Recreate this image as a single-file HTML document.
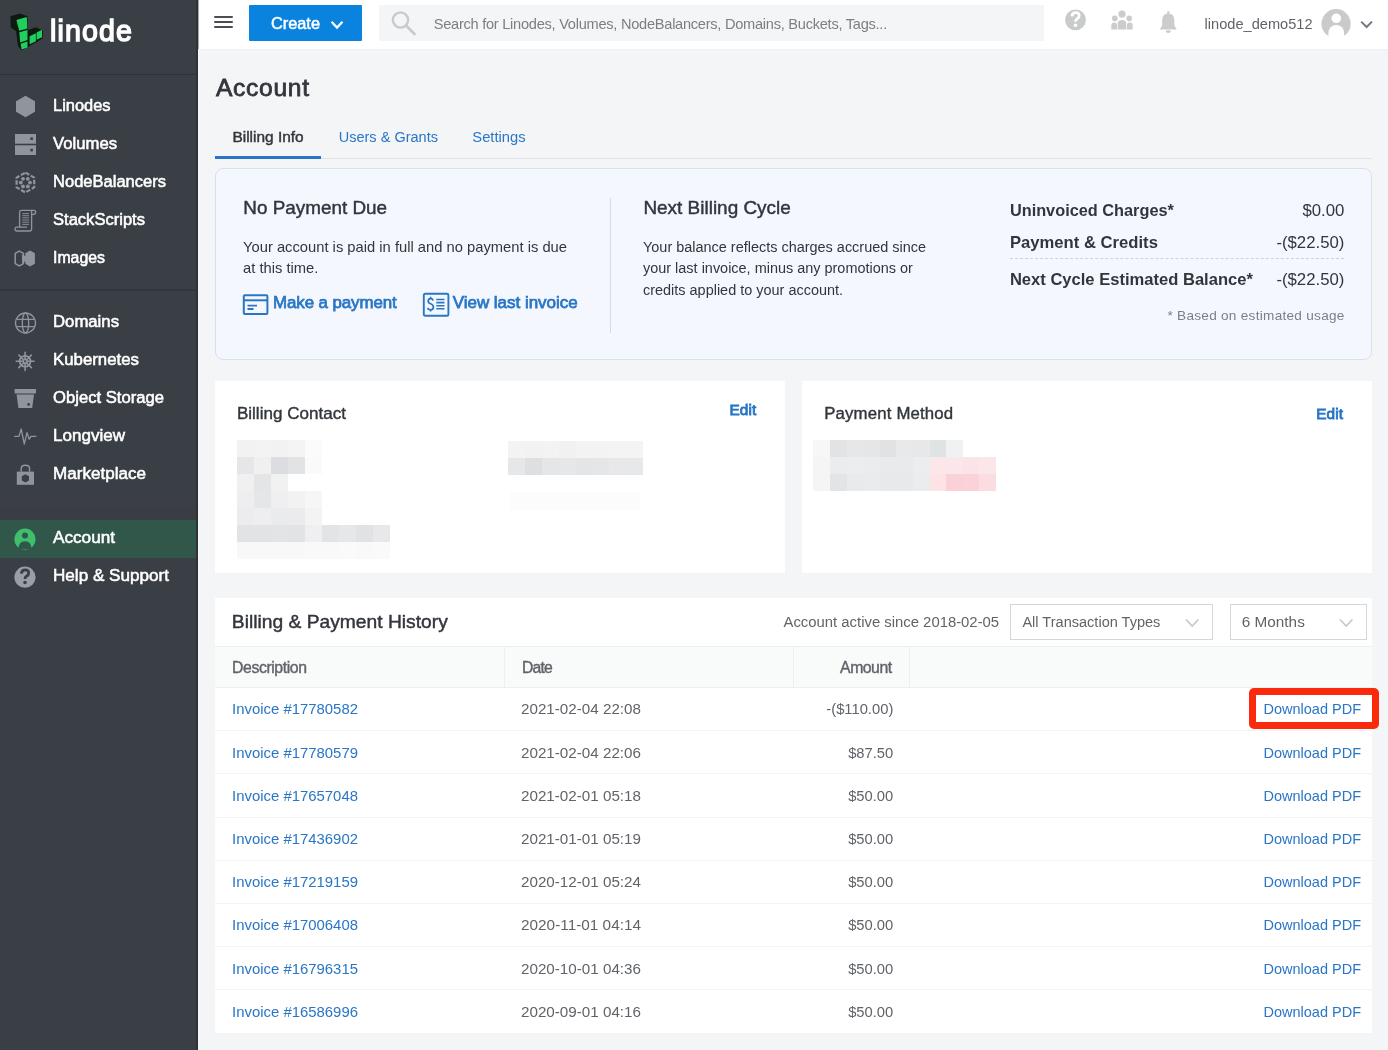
<!DOCTYPE html>
<html><head><meta charset="utf-8"><title>Account</title>
<style>
html,body{margin:0;padding:0;}
body{width:1388px;height:1050px;position:relative;overflow:hidden;background:#f4f5f6;
font-family:"Liberation Sans",sans-serif;}
.t{position:absolute;white-space:nowrap;}
svg{position:absolute;overflow:visible;}
</style></head><body>

<div style="position:absolute;left:0px;top:0px;width:198px;height:1050px;background:#3a3f46;"></div>
<div style="position:absolute;left:0px;top:74px;width:196px;height:1px;background:#2f3337;"></div>
<div style="position:absolute;left:0px;top:289px;width:196px;height:2px;background:#32363c;"></div>
<div style="position:absolute;left:0px;top:508px;width:196px;height:12px;background:#3b3d45;"></div>
<div style="position:absolute;left:0px;top:520px;width:196px;height:38px;background:#31574a;"></div>
<div style="position:absolute;left:196px;top:0px;width:2px;height:1050px;background:#2f3338;"></div>
<div style="position:absolute;left:198px;top:0px;width:1px;height:49px;background:#a3a7ac;"></div>
<svg style="left:0;top:0" width="50" height="60" viewBox="0 0 50 60"><path d="M10.3 16.2 L20 13.6 L27.6 16.3 L28 30 L36 27.2 L43 30.5 L42.5 38.5 L28 47 L21.5 50.5 L18 46 L16 31 L10.8 27.5 Z" fill="#0d1a12"/><path d="M16.4 19.9 L26.8 16.9 L27.4 28.4 L19.2 30.8 Z" fill="#1fd05f"/><path d="M19.3 32.3 L27.5 29.9 L27.5 40.1 L20.2 42.6 Z" fill="#1fd05f"/><path d="M20.6 43.8 L27.5 41.6 L27.5 47.4 L21.6 49.6 Z" fill="#1fd05f"/><path d="M29.6 36.3 L35.9 33.2 L35.9 41.3 L29.6 44.2 Z" fill="#1fd05f"/><path d="M36.6 32.4 L42 29.8 L42 37.2 L36.6 39.8 Z" fill="#1fd05f"/></svg>
<svg style="left:0;top:0" width="198" height="600" viewBox="0 0 198 600"><path d="M25.5 95.8 L35 101.2 L35 111.8 L25.5 117.2 L16 111.8 L16 101.2 Z" fill="#90959c"/><rect x="15" y="134" width="21" height="9.7" fill="#90959c"/><rect x="15" y="145.3" width="21" height="9.7" fill="#90959c"/><rect x="30.3" y="137.4" width="2.6" height="2.6" fill="#3a3f46"/><rect x="30.3" y="148.8" width="2.6" height="2.6" fill="#3a3f46"/><path d="M25.4 172.6 L34.2 177.6 L34.2 187.4 L25.4 192.4 L16.6 187.4 L16.6 177.6 Z" fill="none" stroke="#90959c" stroke-width="2.2" stroke-linejoin="round" stroke-dasharray="4.5 1.6"/><circle cx="23" cy="178.8" r="1.9" fill="#90959c"/><circle cx="27.8" cy="178.8" r="1.9" fill="#90959c"/><circle cx="20.8" cy="182.6" r="1.9" fill="#90959c"/><circle cx="30" cy="182.6" r="1.9" fill="#90959c"/><circle cx="23" cy="186.4" r="1.9" fill="#90959c"/><circle cx="27.8" cy="186.4" r="1.9" fill="#90959c"/><g fill="none" stroke="#90959c" stroke-width="1.3"><path d="M19.6 227.5 V212 Q19.6 210.3 21.3 210.3 H34 Q35.6 210.3 35.6 212.3 Q35.6 214.3 33.6 214.3 H31.6"/><path d="M31.6 210.6 V229 Q31.6 231 29.6 231 H16.8 Q15 231 15 229 Q15 227.2 16.8 227.2 H27"/><path d="M22.3 213.6 H29 M22.3 215.7 H29 M22.3 217.8 H29 M22.3 220 H29 M22.3 222.2 H29 M22.3 224.4 H29" stroke-width="0.9"/></g><path d="M19.3 251.2 L23.4 253.4 V263.6 L19.3 265.8 L15.2 263.6 V253.4 Z" fill="none" stroke="#90959c" stroke-width="1.5"/><path d="M22 254.5 L26 256.5 V261 L22 263 Z" fill="#90959c"/><path d="M30.1 250.6 L34.9 253.2 V263.8 L30.1 266.4 L25.3 263.8 V253.2 Z" fill="#90959c"/><g fill="none" stroke="#90959c" stroke-width="1.3"><circle cx="25.5" cy="323" r="10"/><ellipse cx="25.5" cy="323" rx="3.2" ry="10"/><path d="M16.2 319.3 H34.8 M16.2 326.7 H34.8"/></g><g fill="none" stroke="#90959c"><circle cx="25.1" cy="361.3" r="5.4" stroke-width="1.8"/><path d="M25.1 352.4 V370.4 M16.2 361.3 H34 M18.8 355 L31.4 367.6 M31.4 355 L18.8 367.6" stroke-width="1.6" stroke-linecap="round"/></g><circle cx="25.1" cy="361.3" r="2.6" fill="#90959c"/><circle cx="25.1" cy="361.3" r="1.1" fill="#3a3f46"/><rect x="14.6" y="389" width="21.4" height="4.4" rx="0.6" fill="#90959c"/><path d="M16.6 394.4 H34 L32.2 408 H18.4 Z" fill="#90959c"/><circle cx="28.6" cy="404.4" r="1.4" fill="#3a3f46"/><path d="M14.3 436.4 H19 L21.2 429 L24.3 444 L27 432.6 L29.2 439.2 L31 436.4 H36.4" fill="none" stroke="#90959c" stroke-width="1.3" stroke-linejoin="round"/><path d="M21.2 471.8 V468.6 Q21.2 465.2 25.4 465.2 Q29.6 465.2 29.6 468.6 V471.8" fill="none" stroke="#90959c" stroke-width="1.4"/><rect x="16.8" y="471.6" width="17.2" height="13.2" fill="#90959c"/><path d="M25.4 474.3 L29 476.3 V480.5 L25.4 482.5 L21.8 480.5 V476.3 Z" fill="#3a3f46"/><circle cx="25" cy="539.2" r="10.6" fill="#3fbf6e"/><circle cx="25" cy="535.4" r="3" fill="#31574a"/><path d="M18.6 549.2 Q18.4 541.2 25 541.2 Q31.6 541.2 31.4 549.2 Z" fill="#31574a"/><circle cx="25" cy="577.2" r="10.6" fill="#9a9fa6"/><g transform="translate(25 577.2)"><path d="M-3.6 -3.5 Q-3.3 -7.3 0.1 -7.3 Q3.7 -7.3 3.7 -4.1 Q3.7 -2.1 1.5 -0.9 Q0 -0.1 0 1.9" fill="none" stroke="#3a3f46" stroke-width="2.8"/><circle cx="0" cy="5.3" r="1.75" fill="#3a3f46"/></g></svg>
<div style="position:absolute;left:199px;top:0px;width:1189px;height:49px;background:#ffffff;"></div>
<div style="position:absolute;left:198px;top:49px;width:1190px;height:1px;background:#eef0f2;"></div>
<div style="position:absolute;left:215px;top:158px;width:1157px;height:1px;background:#e1e3e6;"></div>
<div style="position:absolute;left:215px;top:156px;width:106px;height:3px;background:#2a76c6;"></div>
<div style="position:absolute;left:214px;top:16px;width:19px;height:2px;background:#4a4d52;border-radius:1px;"></div>
<div style="position:absolute;left:214px;top:21.2px;width:19px;height:2px;background:#4a4d52;border-radius:1px;"></div>
<div style="position:absolute;left:214px;top:26.4px;width:19px;height:2px;background:#4a4d52;border-radius:1px;"></div>
<div style="position:absolute;left:249px;top:5px;width:113px;height:36px;background:#0a83df;border-radius:1px;"></div>
<svg style="left:330px;top:20px" width="14" height="10" viewBox="0 0 14 10"><path d="M1.5 1.8 L7 7.6 L12.5 1.8" fill="none" stroke="#fff" stroke-width="2.2"/></svg>
<div style="position:absolute;left:379px;top:5px;width:665px;height:36px;background:#f4f5f6;border-radius:1px;"></div>
<svg style="left:390px;top:9px" width="28" height="28" viewBox="0 0 28 28"><circle cx="10.5" cy="11" r="7.6" fill="none" stroke="#c9cacb" stroke-width="2.4"/><path d="M16 16.5 L24.5 25" stroke="#c9cacb" stroke-width="2.8" stroke-linecap="round"/></svg>
<svg style="left:0;top:0" width="1388" height="50" viewBox="0 0 1388 50"><circle cx="1075.5" cy="19.9" r="10.4" fill="#c9cacb"/><g transform="translate(1075.5 19.9)"><path d="M-3.6 -3.5 Q-3.3 -7.3 0.1 -7.3 Q3.7 -7.3 3.7 -4.1 Q3.7 -2.1 1.5 -0.9 Q0 -0.1 0 1.9" fill="none" stroke="#fff" stroke-width="2.8"/><circle cx="0" cy="5.3" r="1.75" fill="#fff"/></g></svg>
<svg style="left:0;top:0" width="1388" height="50" viewBox="0 0 1388 50"><g fill="#cbcccd"><circle cx="1122" cy="14" r="3.6"/><circle cx="1114.8" cy="18.4" r="2.8"/><circle cx="1129.2" cy="18.4" r="2.8"/><path d="M1117.7 29.4 V23.6 Q1117.7 20 1122 20 Q1126.3 20 1126.3 23.6 V29.4 Z"/><path d="M1111.3 29.4 V25.4 Q1111.3 22.4 1114.2 22.4 Q1117 22.4 1117 25.4 V29.4 Z"/><path d="M1127 29.4 V25.4 Q1127 22.4 1129.8 22.4 Q1132.7 22.4 1132.7 25.4 V29.4 Z"/></g><g fill="#cbcccd"><circle cx="1168.3" cy="12.6" r="1.3"/><path d="M1168.3 13.4 C1163.4 13.4 1162.2 17 1162.2 21 V24.6 Q1162.2 26.4 1160.2 28.6 V29.6 H1176.4 V28.6 Q1174.4 26.4 1174.4 24.6 V21 C1174.4 17 1173.2 13.4 1168.3 13.4 Z"/><ellipse cx="1168.3" cy="31.6" rx="2.6" ry="1.4"/></g></svg>
<svg style="left:0;top:0" width="1388" height="50" viewBox="0 0 1388 50"><circle cx="1336.1" cy="23.7" r="14.6" fill="#c9cacb"/><circle cx="1336.3" cy="18.3" r="4.8" fill="#fff"/><path d="M1328.4 40 V32.9 A7.85 7.85 0 0 1 1344.1 32.9 V40 Z" fill="#fff"/><path d="M1361.2 21.6 L1366.6 27 L1372 21.6" fill="none" stroke="#727780" stroke-width="2"/></svg>
<div style="position:absolute;left:215px;top:168px;width:1155px;height:190px;background:#f4f8fe;border:1px solid #d5e3ef;border-radius:8px;"></div>
<svg style="left:242px;top:293px" width="28" height="23" viewBox="0 0 28 23"><rect x="1.8" y="2.3" width="23.6" height="18.6" rx="1" fill="none" stroke="#2a76c6" stroke-width="2"/><path d="M1.8 7.3 H25.4" stroke="#2a76c6" stroke-width="2"/><path d="M5.5 12.6 H15 M5.5 16 H11.5" stroke="#2a76c6" stroke-width="1.8"/></svg>
<svg style="left:422px;top:292px" width="28" height="26" viewBox="0 0 28 26"><rect x="1.8" y="1.8" width="24.6" height="22" rx="1.4" fill="none" stroke="#2a76c6" stroke-width="1.9"/><path d="M11.2 8.4 Q10.6 6.6 8.6 6.6 Q6.2 6.6 6.2 9 Q6.2 11 8.6 11.8 Q11.4 12.8 11.4 15.2 Q11.4 17.8 8.6 17.8 Q6.2 17.8 5.8 15.8 M8.6 4.8 V6.6 M8.6 17.8 V19.6" fill="none" stroke="#2a76c6" stroke-width="1.7"/><path d="M14.3 7.5 H22.5 M14.3 10.6 H22.5 M14.3 13.7 H22.5 M14.3 16.8 H22.5" stroke="#2a76c6" stroke-width="1.6"/></svg>
<div style="position:absolute;left:610px;top:198px;width:1px;height:135px;background:#d3dbe5;"></div>
<div style="position:absolute;left:1010px;top:258px;width:334px;height:0;border-top:1px dashed #c9d3de;"></div>
<div style="position:absolute;left:215px;top:381px;width:570px;height:192px;background:#ffffff;"></div>
<div style="position:absolute;left:802px;top:381px;width:570px;height:192px;background:#ffffff;"></div>
<div style="position:absolute;left:237.3px;top:440.4px;width:17.2px;height:17.2px;background:#f2f2f3;"></div><div style="position:absolute;left:254.2px;top:440.4px;width:17.2px;height:17.2px;background:#f3f3f4;"></div><div style="position:absolute;left:271.1px;top:440.4px;width:17.2px;height:17.2px;background:#f2f2f3;"></div><div style="position:absolute;left:288.0px;top:440.4px;width:17.2px;height:17.2px;background:#f4f4f5;"></div><div style="position:absolute;left:304.9px;top:440.4px;width:17.2px;height:17.2px;background:#fbfbfb;"></div><div style="position:absolute;left:237.3px;top:457.3px;width:17.2px;height:17.2px;background:#e6e6e8;"></div><div style="position:absolute;left:254.2px;top:457.3px;width:17.2px;height:17.2px;background:#f0f0f1;"></div><div style="position:absolute;left:271.1px;top:457.3px;width:17.2px;height:17.2px;background:#dcdde0;"></div><div style="position:absolute;left:288.0px;top:457.3px;width:17.2px;height:17.2px;background:#e2e3e5;"></div><div style="position:absolute;left:304.9px;top:457.3px;width:17.2px;height:17.2px;background:#fafafa;"></div><div style="position:absolute;left:237.3px;top:474.2px;width:17.2px;height:17.2px;background:#f0f0f1;"></div><div style="position:absolute;left:254.2px;top:474.2px;width:17.2px;height:17.2px;background:#e4e5e7;"></div><div style="position:absolute;left:271.1px;top:474.2px;width:17.2px;height:17.2px;background:#f1f1f2;"></div><div style="position:absolute;left:237.3px;top:491.1px;width:17.2px;height:17.2px;background:#eeeef0;"></div><div style="position:absolute;left:254.2px;top:491.1px;width:17.2px;height:17.2px;background:#e5e6e8;"></div><div style="position:absolute;left:271.1px;top:491.1px;width:17.2px;height:17.2px;background:#efeff1;"></div><div style="position:absolute;left:288.0px;top:491.1px;width:17.2px;height:17.2px;background:#f2f2f3;"></div><div style="position:absolute;left:304.9px;top:491.1px;width:17.2px;height:17.2px;background:#f6f6f7;"></div><div style="position:absolute;left:237.3px;top:508.0px;width:17.2px;height:17.2px;background:#ececee;"></div><div style="position:absolute;left:254.2px;top:508.0px;width:17.2px;height:17.2px;background:#eeeef0;"></div><div style="position:absolute;left:271.1px;top:508.0px;width:17.2px;height:17.2px;background:#eaebed;"></div><div style="position:absolute;left:288.0px;top:508.0px;width:17.2px;height:17.2px;background:#ebebed;"></div><div style="position:absolute;left:304.9px;top:508.0px;width:17.2px;height:17.2px;background:#f3f3f4;"></div><div style="position:absolute;left:237.3px;top:524.9px;width:17.2px;height:17.2px;background:#e2e3e5;"></div><div style="position:absolute;left:254.2px;top:524.9px;width:17.2px;height:17.2px;background:#e2e3e5;"></div><div style="position:absolute;left:271.1px;top:524.9px;width:17.2px;height:17.2px;background:#e3e4e6;"></div><div style="position:absolute;left:288.0px;top:524.9px;width:17.2px;height:17.2px;background:#e2e3e5;"></div><div style="position:absolute;left:304.9px;top:524.9px;width:17.2px;height:17.2px;background:#efeff1;"></div><div style="position:absolute;left:321.8px;top:524.9px;width:17.2px;height:17.2px;background:#e3e4e6;"></div><div style="position:absolute;left:338.7px;top:524.9px;width:17.2px;height:17.2px;background:#e6e7e9;"></div><div style="position:absolute;left:355.6px;top:524.9px;width:17.2px;height:17.2px;background:#e1e2e4;"></div><div style="position:absolute;left:372.5px;top:524.9px;width:17.2px;height:17.2px;background:#e8e8ea;"></div><div style="position:absolute;left:237.3px;top:541.8px;width:17.2px;height:17.2px;background:#f8f8f9;"></div><div style="position:absolute;left:254.2px;top:541.8px;width:17.2px;height:17.2px;background:#f8f8f9;"></div><div style="position:absolute;left:271.1px;top:541.8px;width:17.2px;height:17.2px;background:#f8f8f9;"></div><div style="position:absolute;left:288.0px;top:541.8px;width:17.2px;height:17.2px;background:#f8f8f9;"></div><div style="position:absolute;left:304.9px;top:541.8px;width:17.2px;height:17.2px;background:#f9f9f9;"></div><div style="position:absolute;left:321.8px;top:541.8px;width:17.2px;height:17.2px;background:#f9f9f9;"></div><div style="position:absolute;left:338.7px;top:541.8px;width:17.2px;height:17.2px;background:#fafafa;"></div><div style="position:absolute;left:355.6px;top:541.8px;width:17.2px;height:17.2px;background:#f9f9f9;"></div><div style="position:absolute;left:372.5px;top:541.8px;width:17.2px;height:17.2px;background:#fafafa;"></div>
<div style="position:absolute;left:508.0px;top:440.6px;width:17.2px;height:17.2px;background:#f3f3f4;"></div><div style="position:absolute;left:524.9px;top:440.6px;width:17.2px;height:17.2px;background:#f2f2f3;"></div><div style="position:absolute;left:541.8px;top:440.6px;width:17.2px;height:17.2px;background:#f3f3f4;"></div><div style="position:absolute;left:558.7px;top:440.6px;width:17.2px;height:17.2px;background:#f1f1f2;"></div><div style="position:absolute;left:575.6px;top:440.6px;width:17.2px;height:17.2px;background:#f3f3f4;"></div><div style="position:absolute;left:592.5px;top:440.6px;width:17.2px;height:17.2px;background:#f3f3f4;"></div><div style="position:absolute;left:609.4px;top:440.6px;width:17.2px;height:17.2px;background:#f4f4f5;"></div><div style="position:absolute;left:626.3px;top:440.6px;width:17.2px;height:17.2px;background:#f4f4f5;"></div><div style="position:absolute;left:508.0px;top:457.5px;width:17.2px;height:17.2px;background:#e6e7e9;"></div><div style="position:absolute;left:524.9px;top:457.5px;width:17.2px;height:17.2px;background:#dedfe1;"></div><div style="position:absolute;left:541.8px;top:457.5px;width:17.2px;height:17.2px;background:#e5e6e8;"></div><div style="position:absolute;left:558.7px;top:457.5px;width:17.2px;height:17.2px;background:#e6e7e9;"></div><div style="position:absolute;left:575.6px;top:457.5px;width:17.2px;height:17.2px;background:#e4e5e7;"></div><div style="position:absolute;left:592.5px;top:457.5px;width:17.2px;height:17.2px;background:#e5e6e8;"></div><div style="position:absolute;left:609.4px;top:457.5px;width:17.2px;height:17.2px;background:#e8e8ea;"></div><div style="position:absolute;left:626.3px;top:457.5px;width:17.2px;height:17.2px;background:#e7e8ea;"></div>
<div style="position:absolute;left:510px;top:492px;width:130px;height:18px;background:#fcfcfc;"></div>
<div style="position:absolute;left:813.3px;top:440.1px;width:16.9px;height:17.2px;background:#f7f7f7;"></div><div style="position:absolute;left:829.9px;top:440.1px;width:16.9px;height:17.2px;background:#e2e3e5;"></div><div style="position:absolute;left:846.5px;top:440.1px;width:16.9px;height:17.2px;background:#e6e7e9;"></div><div style="position:absolute;left:863.1px;top:440.1px;width:16.9px;height:17.2px;background:#e5e6e8;"></div><div style="position:absolute;left:879.7px;top:440.1px;width:16.9px;height:17.2px;background:#e1e2e4;"></div><div style="position:absolute;left:896.3px;top:440.1px;width:16.9px;height:17.2px;background:#e8e9eb;"></div><div style="position:absolute;left:912.9px;top:440.1px;width:16.9px;height:17.2px;background:#e7e8ea;"></div><div style="position:absolute;left:929.5px;top:440.1px;width:16.9px;height:17.2px;background:#dfe3e3;"></div><div style="position:absolute;left:946.1px;top:440.1px;width:16.9px;height:17.2px;background:#f0f1f2;"></div><div style="position:absolute;left:813.3px;top:457.0px;width:16.9px;height:17.2px;background:#f5f5f5;"></div><div style="position:absolute;left:829.9px;top:457.0px;width:16.9px;height:17.2px;background:#ebecee;"></div><div style="position:absolute;left:846.5px;top:457.0px;width:16.9px;height:17.2px;background:#ecedef;"></div><div style="position:absolute;left:863.1px;top:457.0px;width:16.9px;height:17.2px;background:#ebecee;"></div><div style="position:absolute;left:879.7px;top:457.0px;width:16.9px;height:17.2px;background:#e9eaec;"></div><div style="position:absolute;left:896.3px;top:457.0px;width:16.9px;height:17.2px;background:#e9eaec;"></div><div style="position:absolute;left:912.9px;top:457.0px;width:16.9px;height:17.2px;background:#ecedef;"></div><div style="position:absolute;left:929.5px;top:457.0px;width:16.9px;height:17.2px;background:#fbe6e9;"></div><div style="position:absolute;left:946.1px;top:457.0px;width:16.9px;height:17.2px;background:#fbe6e9;"></div><div style="position:absolute;left:962.7px;top:457.0px;width:16.9px;height:17.2px;background:#fbe4e8;"></div><div style="position:absolute;left:979.3px;top:457.0px;width:16.9px;height:17.2px;background:#fbe6e9;"></div><div style="position:absolute;left:813.3px;top:473.9px;width:16.9px;height:17.2px;background:#f5f5f5;"></div><div style="position:absolute;left:829.9px;top:473.9px;width:16.9px;height:17.2px;background:#e3e4e6;"></div><div style="position:absolute;left:846.5px;top:473.9px;width:16.9px;height:17.2px;background:#e9eaec;"></div><div style="position:absolute;left:863.1px;top:473.9px;width:16.9px;height:17.2px;background:#eaebed;"></div><div style="position:absolute;left:879.7px;top:473.9px;width:16.9px;height:17.2px;background:#e8e9eb;"></div><div style="position:absolute;left:896.3px;top:473.9px;width:16.9px;height:17.2px;background:#e8e9eb;"></div><div style="position:absolute;left:912.9px;top:473.9px;width:16.9px;height:17.2px;background:#ebecee;"></div><div style="position:absolute;left:929.5px;top:473.9px;width:16.9px;height:17.2px;background:#fde3e6;"></div><div style="position:absolute;left:946.1px;top:473.9px;width:16.9px;height:17.2px;background:#fad1d7;"></div><div style="position:absolute;left:962.7px;top:473.9px;width:16.9px;height:17.2px;background:#fad2d8;"></div><div style="position:absolute;left:979.3px;top:473.9px;width:16.9px;height:17.2px;background:#fbdde1;"></div>
<div style="position:absolute;left:215px;top:598px;width:1157px;height:435px;background:#ffffff;"></div>
<div style="position:absolute;left:1010px;top:604px;width:203px;height:36px;background:#fff;border:1px solid #d5d6d8;box-sizing:border-box;"></div>
<svg style="left:1185px;top:618px" width="15" height="10" viewBox="0 0 15 10"><path d="M1 1.5 L7.2 8 L13.4 1.5" fill="none" stroke="#c5c6c8" stroke-width="1.6"/></svg>
<div style="position:absolute;left:1230px;top:604px;width:137px;height:36px;background:#fff;border:1px solid #d5d6d8;box-sizing:border-box;"></div>
<svg style="left:1339px;top:618px" width="15" height="10" viewBox="0 0 15 10"><path d="M1 1.5 L7.2 8 L13.4 1.5" fill="none" stroke="#c5c6c8" stroke-width="1.6"/></svg>
<div style="position:absolute;left:215px;top:646px;width:1157px;height:42px;background:#f9fafa;border-top:1px solid #eceef0;border-bottom:1px solid #eceef0;box-sizing:border-box;"></div>
<div style="position:absolute;left:504px;top:647px;width:1px;height:40px;background:#eceef0;"></div>
<div style="position:absolute;left:793px;top:647px;width:1px;height:40px;background:#eceef0;"></div>
<div style="position:absolute;left:909px;top:647px;width:1px;height:40px;background:#eceef0;"></div>
<div style="position:absolute;left:215px;top:730px;width:1157px;height:1px;background:#f2f3f4;"></div>
<div style="position:absolute;left:215px;top:773px;width:1157px;height:1px;background:#f2f3f4;"></div>
<div style="position:absolute;left:215px;top:817px;width:1157px;height:1px;background:#f2f3f4;"></div>
<div style="position:absolute;left:215px;top:860px;width:1157px;height:1px;background:#f2f3f4;"></div>
<div style="position:absolute;left:215px;top:903px;width:1157px;height:1px;background:#f2f3f4;"></div>
<div style="position:absolute;left:215px;top:946px;width:1157px;height:1px;background:#f2f3f4;"></div>
<div style="position:absolute;left:215px;top:989px;width:1157px;height:1px;background:#f2f3f4;"></div>
<div style="position:absolute;left:1249px;top:688px;width:130px;height:41px;box-sizing:border-box;border:7px solid #fc2a0c;border-radius:5px;"></div>
<div style="position:absolute;left:0;top:0;width:1388px;height:1050px;will-change:transform;"><svg style="left:0;top:0" width="1388" height="1050" font-family="Liberation Sans"><text x="53.00" y="110.50" font-size="16.41" fill="#ffffff" stroke="#ffffff" stroke-width="0.55" textLength="57.50" lengthAdjust="spacing">Linodes</text><text x="53.00" y="148.50" font-size="16.69" fill="#ffffff" stroke="#ffffff" stroke-width="0.55" textLength="64.00" lengthAdjust="spacing">Volumes</text><text x="53.00" y="186.50" font-size="16.53" fill="#ffffff" stroke="#ffffff" stroke-width="0.55" textLength="113.00" lengthAdjust="spacing">NodeBalancers</text><text x="53.00" y="224.50" font-size="16.56" fill="#ffffff" stroke="#ffffff" stroke-width="0.55" textLength="92.00" lengthAdjust="spacing">StackScripts</text><text x="53.00" y="262.50" font-size="15.86" fill="#ffffff" stroke="#ffffff" stroke-width="0.55" textLength="52.00" lengthAdjust="spacing">Images</text><text x="53.00" y="326.50" font-size="16.73" fill="#ffffff" stroke="#ffffff" stroke-width="0.55" textLength="66.00" lengthAdjust="spacing">Domains</text><text x="53.00" y="364.50" font-size="16.81" fill="#ffffff" stroke="#ffffff" stroke-width="0.55" textLength="86.00" lengthAdjust="spacing">Kubernetes</text><text x="53.00" y="402.50" font-size="16.64" fill="#ffffff" stroke="#ffffff" stroke-width="0.55" textLength="111.00" lengthAdjust="spacing">Object Storage</text><text x="53.00" y="440.50" font-size="17.04" fill="#ffffff" stroke="#ffffff" stroke-width="0.55" textLength="72.00" lengthAdjust="spacing">Longview</text><text x="53.00" y="478.50" font-size="17.07" fill="#ffffff" stroke="#ffffff" stroke-width="0.55" textLength="93.00" lengthAdjust="spacing">Marketplace</text><text x="53.00" y="543.00" font-size="17.16" fill="#ffffff" stroke="#ffffff" stroke-width="0.55" textLength="62.00" lengthAdjust="spacing">Account</text><text x="53.00" y="581.00" font-size="17.10" fill="#ffffff" stroke="#ffffff" stroke-width="0.55" textLength="116.00" lengthAdjust="spacing">Help &amp; Support</text><text x="50.00" y="41.40" font-size="28.60" fill="#ffffff" stroke="#ffffff" stroke-width="1.4" textLength="82.00" lengthAdjust="spacing">linode</text><text x="216.00" y="96.00" font-size="24.60" fill="#32363c" stroke="#32363c" stroke-width="0.8" textLength="93.00" lengthAdjust="spacing">Account</text><text x="232.40" y="141.70" font-size="15.45" fill="#32363c" stroke="#32363c" stroke-width="0.45" textLength="71.30" lengthAdjust="spacing">Billing Info</text><text x="338.70" y="141.70" font-size="14.53" fill="#2a76c6" textLength="99.30" lengthAdjust="spacing">Users &amp; Grants</text><text x="472.30" y="141.70" font-size="14.72" fill="#2a76c6" textLength="53.20" lengthAdjust="spacing">Settings</text><text x="271.00" y="28.70" font-size="16.33" fill="#ffffff" stroke="#ffffff" stroke-width="0.5" textLength="49.00" lengthAdjust="spacing">Create</text><text x="433.70" y="28.50" font-size="14.60" fill="#7b7f85" textLength="453.50" lengthAdjust="spacing">Search for Linodes, Volumes, NodeBalancers, Domains, Buckets, Tags...</text><text x="1204.60" y="28.70" font-size="14.60" fill="#606469" textLength="108.00" lengthAdjust="spacing">linode_demo512</text><text x="243.30" y="213.80" font-size="18.87" fill="#32363c" stroke="#32363c" stroke-width="0.45" textLength="143.70" lengthAdjust="spacing">No Payment Due</text><text x="243.00" y="252.00" font-size="14.74" fill="#32363c" textLength="324.00" lengthAdjust="spacing">Your account is paid in full and no payment is due</text><text x="243.00" y="273.00" font-size="14.74" fill="#32363c" textLength="75.36" lengthAdjust="spacing">at this time.</text><text x="273.00" y="308.00" font-size="16.90" fill="#2a76c6" stroke="#2a76c6" stroke-width="0.75" textLength="123.70" lengthAdjust="spacing">Make a payment</text><text x="452.70" y="308.00" font-size="17.00" fill="#2a76c6" stroke="#2a76c6" stroke-width="0.75" textLength="125.00" lengthAdjust="spacing">View last invoice</text><text x="643.40" y="214.00" font-size="18.95" fill="#32363c" stroke="#32363c" stroke-width="0.45" textLength="147.40" lengthAdjust="spacing">Next Billing Cycle</text><text x="643.00" y="252.00" font-size="14.45" fill="#32363c" textLength="283.00" lengthAdjust="spacing">Your balance reflects charges accrued since</text><text x="643.00" y="273.20" font-size="14.45" fill="#32363c" textLength="269.85" lengthAdjust="spacing">your last invoice, minus any promotions or</text><text x="643.00" y="294.50" font-size="14.45" fill="#32363c" textLength="200.01" lengthAdjust="spacing">credits applied to your account.</text><text x="1009.90" y="216.00" font-size="16.31" font-weight="bold" fill="#32363c" textLength="164.00" lengthAdjust="spacing">Uninvoiced Charges*</text><text x="1344.40" y="216.00" font-size="16.78" text-anchor="end" fill="#32363c" textLength="42.00" lengthAdjust="spacing">$0.00</text><text x="1009.90" y="247.60" font-size="16.64" font-weight="bold" fill="#32363c" textLength="148.00" lengthAdjust="spacing">Payment &amp; Credits</text><text x="1344.40" y="247.60" font-size="16.76" text-anchor="end" fill="#32363c" textLength="68.00" lengthAdjust="spacing">-($22.50)</text><text x="1009.90" y="285.40" font-size="16.56" font-weight="bold" fill="#32363c" textLength="243.00" lengthAdjust="spacing">Next Cycle Estimated Balance*</text><text x="1344.40" y="285.40" font-size="16.76" text-anchor="end" fill="#32363c" textLength="68.00" lengthAdjust="spacing">-($22.50)</text><text x="1344.40" y="319.70" font-size="13.60" text-anchor="end" fill="#7a7f86" textLength="177.00" lengthAdjust="spacing">* Based on estimated usage</text><text x="236.90" y="418.70" font-size="17.05" fill="#32363c" stroke="#32363c" stroke-width="0.4" textLength="109.00" lengthAdjust="spacing">Billing Contact</text><text x="756.20" y="415.00" font-size="15.40" text-anchor="end" fill="#2575c6" stroke="#2575c6" stroke-width="0.8" textLength="26.70" lengthAdjust="spacing">Edit</text><text x="824.20" y="418.50" font-size="16.80" fill="#32363c" stroke="#32363c" stroke-width="0.4" textLength="129.00" lengthAdjust="spacing">Payment Method</text><text x="1343.00" y="419.00" font-size="15.40" text-anchor="end" fill="#2575c6" stroke="#2575c6" stroke-width="0.8" textLength="26.70" lengthAdjust="spacing">Edit</text><text x="231.80" y="627.80" font-size="19.24" fill="#32363c" stroke="#32363c" stroke-width="0.45" textLength="216.00" lengthAdjust="spacing">Billing &amp; Payment History</text><text x="999.10" y="627.00" font-size="14.86" text-anchor="end" fill="#606469" textLength="215.60" lengthAdjust="spacing">Account active since 2018-02-05</text><text x="1022.40" y="627.00" font-size="14.55" fill="#606469" textLength="138.00" lengthAdjust="spacing">All Transaction Types</text><text x="1241.80" y="627.00" font-size="15.32" fill="#606469" textLength="63.00" lengthAdjust="spacing">6 Months</text><text x="232.00" y="672.50" font-size="15.80" fill="#606469" stroke="#606469" stroke-width="0.4" textLength="75.00" lengthAdjust="spacing">Description</text><text x="521.90" y="672.50" font-size="15.80" fill="#606469" stroke="#606469" stroke-width="0.4" textLength="31.00" lengthAdjust="spacing">Date</text><text x="892.10" y="672.50" font-size="15.80" text-anchor="end" fill="#606469" stroke="#606469" stroke-width="0.4" textLength="52.00" lengthAdjust="spacing">Amount</text><text x="232.00" y="714.40" font-size="14.91" fill="#2a76c6" textLength="126.00" lengthAdjust="spacing">Invoice #17780582</text><text x="521.00" y="714.40" font-size="15.20" fill="#606469" textLength="120.00" lengthAdjust="spacing">2021-02-04 22:08</text><text x="893.30" y="714.40" font-size="14.76" text-anchor="end" fill="#606469" textLength="67.00" lengthAdjust="spacing">-($110.00)</text><text x="1361.00" y="714.40" font-size="14.50" text-anchor="end" fill="#2a76c6" textLength="97.50" lengthAdjust="spacing">Download PDF</text><text x="232.00" y="757.60" font-size="14.91" fill="#2a76c6" textLength="126.00" lengthAdjust="spacing">Invoice #17780579</text><text x="521.00" y="757.60" font-size="15.20" fill="#606469" textLength="120.00" lengthAdjust="spacing">2021-02-04 22:06</text><text x="893.30" y="757.60" font-size="14.76" text-anchor="end" fill="#606469" textLength="45.15" lengthAdjust="spacing">$87.50</text><text x="1361.00" y="757.60" font-size="14.50" text-anchor="end" fill="#2a76c6" textLength="97.50" lengthAdjust="spacing">Download PDF</text><text x="232.00" y="800.80" font-size="14.91" fill="#2a76c6" textLength="126.00" lengthAdjust="spacing">Invoice #17657048</text><text x="521.00" y="800.80" font-size="15.20" fill="#606469" textLength="120.00" lengthAdjust="spacing">2021-02-01 05:18</text><text x="893.30" y="800.80" font-size="14.76" text-anchor="end" fill="#606469" textLength="45.15" lengthAdjust="spacing">$50.00</text><text x="1361.00" y="800.80" font-size="14.50" text-anchor="end" fill="#2a76c6" textLength="97.50" lengthAdjust="spacing">Download PDF</text><text x="232.00" y="844.00" font-size="14.91" fill="#2a76c6" textLength="126.00" lengthAdjust="spacing">Invoice #17436902</text><text x="521.00" y="844.00" font-size="15.20" fill="#606469" textLength="120.00" lengthAdjust="spacing">2021-01-01 05:19</text><text x="893.30" y="844.00" font-size="14.76" text-anchor="end" fill="#606469" textLength="45.15" lengthAdjust="spacing">$50.00</text><text x="1361.00" y="844.00" font-size="14.50" text-anchor="end" fill="#2a76c6" textLength="97.50" lengthAdjust="spacing">Download PDF</text><text x="232.00" y="887.20" font-size="14.91" fill="#2a76c6" textLength="126.00" lengthAdjust="spacing">Invoice #17219159</text><text x="521.00" y="887.20" font-size="15.20" fill="#606469" textLength="120.00" lengthAdjust="spacing">2020-12-01 05:24</text><text x="893.30" y="887.20" font-size="14.76" text-anchor="end" fill="#606469" textLength="45.15" lengthAdjust="spacing">$50.00</text><text x="1361.00" y="887.20" font-size="14.50" text-anchor="end" fill="#2a76c6" textLength="97.50" lengthAdjust="spacing">Download PDF</text><text x="232.00" y="930.40" font-size="14.91" fill="#2a76c6" textLength="126.00" lengthAdjust="spacing">Invoice #17006408</text><text x="521.00" y="930.40" font-size="15.34" fill="#606469" textLength="120.00" lengthAdjust="spacing">2020-11-01 04:14</text><text x="893.30" y="930.40" font-size="14.76" text-anchor="end" fill="#606469" textLength="45.15" lengthAdjust="spacing">$50.00</text><text x="1361.00" y="930.40" font-size="14.50" text-anchor="end" fill="#2a76c6" textLength="97.50" lengthAdjust="spacing">Download PDF</text><text x="232.00" y="973.60" font-size="14.91" fill="#2a76c6" textLength="126.00" lengthAdjust="spacing">Invoice #16796315</text><text x="521.00" y="973.60" font-size="15.20" fill="#606469" textLength="120.00" lengthAdjust="spacing">2020-10-01 04:36</text><text x="893.30" y="973.60" font-size="14.76" text-anchor="end" fill="#606469" textLength="45.15" lengthAdjust="spacing">$50.00</text><text x="1361.00" y="973.60" font-size="14.50" text-anchor="end" fill="#2a76c6" textLength="97.50" lengthAdjust="spacing">Download PDF</text><text x="232.00" y="1016.80" font-size="14.91" fill="#2a76c6" textLength="126.00" lengthAdjust="spacing">Invoice #16586996</text><text x="521.00" y="1016.80" font-size="15.20" fill="#606469" textLength="120.00" lengthAdjust="spacing">2020-09-01 04:16</text><text x="893.30" y="1016.80" font-size="14.76" text-anchor="end" fill="#606469" textLength="45.15" lengthAdjust="spacing">$50.00</text><text x="1361.00" y="1016.80" font-size="14.50" text-anchor="end" fill="#2a76c6" textLength="97.50" lengthAdjust="spacing">Download PDF</text></svg></div>
</body></html>
